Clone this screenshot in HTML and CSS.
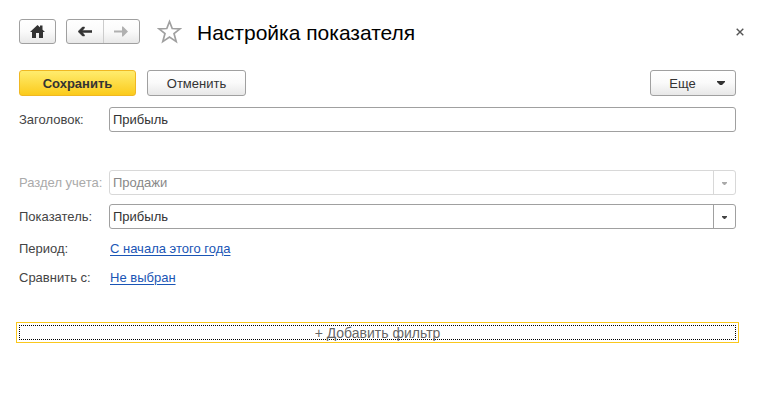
FILE: index.html
```html
<!DOCTYPE html>
<html lang="ru">
<head>
    <meta charset="UTF-8">
    <meta name="viewport" content="width=device-width, initial-scale=1.0">
    <title>Настройка показателя</title>
    <link rel="stylesheet" href="styles.css">
</head>
<body>
    <header class="header">
        <button type="button" class="btn home" aria-label="Домой">
            <svg width="15" height="13" viewBox="0 0 15 13"><path d="M7.5 0L15 7H13V13H9V8H6V13H2V7H0Z M10 0.5H12.5V5H10Z" fill="#333"/></svg>
        </button>
        <div class="nav">
            <button type="button" class="nav-btn" aria-label="Назад">
                <svg width="14" height="11" viewBox="0 0 14 11"><path d="M0 5.5L4.5 1H6.5V2L4.5 4.5H14V6.5H4.5L6.5 9V10H4.5Z" fill="#333" stroke="#333" stroke-width="0.5"/></svg>
            </button>
            <button type="button" class="nav-btn forward" aria-label="Вперед" disabled>
                <svg width="14" height="11" viewBox="0 0 14 11"><path d="M14 5.5L9 0.5H8V4.5H0V6.5H8V10.5H9Z" fill="#b0b0b0"/></svg>
            </button>
        </div>
        <button type="button" class="icon-btn star" aria-label="В избранное">
            <svg width="25" height="25" viewBox="0 0 25 25"><path d="M12.5 2.5L15.2 9.5L23 9.8L17 14.6L19.2 22.6L12.5 18.1L5.8 22.6L8 14.6L2 9.8L9.8 9.5Z" fill="none" stroke="#a0a0a0" stroke-width="1.7"/></svg>
        </button>
        <h1 class="title">Настройка показателя</h1>
        <button type="button" class="icon-btn close" aria-label="Закрыть">
            <svg width="8" height="8" viewBox="0 0 8 8"><path d="M0.7 0.7L7.3 7.3M7.3 0.7L0.7 7.3" stroke="#555" stroke-width="1.4"/></svg>
        </button>
    </header>

    <form class="form">
        <div class="toolbar">
            <button type="button" class="btn save">Сохранить</button>
            <button type="button" class="btn cancel">Отменить</button>
            <button type="button" class="btn more">
                Еще
                <svg width="8" height="4" viewBox="0 0 8 4"><path d="M0 0H8V1L5 4H3L0 1Z" fill="#333"/></svg>
            </button>
        </div>

        <div class="row row-title">
            <label for="caption">Заголовок:</label>
            <input type="text" id="caption" class="field" value="Прибыль">
        </div>
        <div class="row disabled">
            <label for="section">Раздел учета:</label>
            <div class="combo">
                <select id="section" class="field" disabled>
                    <option>Продажи</option>
                </select>
                <span class="arrow"><svg width="5" height="3" viewBox="0 0 5 3"><path d="M0 0H5V1L3 3H2L0 1Z" fill="currentColor"/></svg></span>
            </div>
        </div>
        <div class="row">
            <label for="indicator">Показатель:</label>
            <div class="combo">
                <select id="indicator" class="field">
                    <option>Прибыль</option>
                </select>
                <span class="arrow"><svg width="5" height="3" viewBox="0 0 5 3"><path d="M0 0H5V1L3 3H2L0 1Z" fill="currentColor"/></svg></span>
            </div>
        </div>
        <div class="row row-link">
            <span id="period-label">Период:</span>
            <a href="#" class="link" aria-describedby="period-label">С начала этого года</a>
        </div>
        <div class="row row-link">
            <span id="compare-label">Сравнить с:</span>
            <a href="#" class="link" aria-describedby="compare-label">Не выбран</a>
        </div>

        <div class="filter">
            <button type="button" class="add-filter">+ Добавить фильтр</button>
        </div>
    </form>
</body>
</html>
```

FILE: styles.css
```css
* {
    box-sizing: border-box;
}

body {
    margin: 0;
    padding: 19px 18px 19px 19px;
    background-color: #fff;
    color: #444;
    font-family: Arial, "Liberation Sans", sans-serif;
    font-size: 13px;
}

button,
input,
select {
    font: inherit;
    color: #333;
}

svg {
    display: block;
}

.header {
    display: flex;
    align-items: center;
    height: 25px;
}

.btn,
.nav {
    border: 1px solid #a0a0a0;
    border-radius: 3px;
    background: linear-gradient(#fff, #fafafa 50%, #e8e8e8);
}

.btn {
    display: flex;
    align-items: center;
    justify-content: center;
    height: 26px;
    padding: 0;
    cursor: pointer;
}

.header .home {
    width: 37px;
    height: 25px;
    margin-right: 10px;
}

.nav {
    display: flex;
    width: 74px;
    height: 25px;
    margin-right: 17px;
}

.nav-btn {
    flex: 1;
    display: flex;
    align-items: center;
    justify-content: center;
    padding: 0;
    border: none;
    background: none;
}

.forward {
    border-left: 1px solid #ccc;
}

.icon-btn {
    padding: 0;
    border: none;
    background: none;
    cursor: pointer;
}

.star {
    margin-right: 15px;
}

.title {
    flex: 1;
    margin: 0;
    padding-top: 2px;
    color: #000;
    font-size: 21px;
    font-weight: normal;
    line-height: 24px;
}

.form {
    margin-right: 8px;
}

.toolbar {
    display: flex;
    gap: 11px;
    margin: 26px 0 11px;
}

.save {
    width: 117px;
    border-color: #f0b822;
    background: linear-gradient(#ffec6e, #fbcb1c);
    font-weight: bold;
}

.cancel {
    width: 99px;
}

.more {
    gap: 21px;
    width: 86px;
    margin-left: auto;
    padding-left: 8px;
}

.row {
    display: grid;
    grid-template-columns: 90px 1fr;
    align-items: center;
    margin-bottom: 9px;
}

.row-title {
    margin-bottom: 38px;
}

.field {
    width: 100%;
    height: 25px;
    padding: 0 3px;
    border: 1px solid #a0a0a0;
    border-radius: 3px;
    background-color: #fff;
}

.combo {
    display: grid;
    grid-template-columns: 1fr 23px;
}

.combo .field {
    grid-area: 1 / 1 / 2 / 3;
    appearance: none;
}

/* drop-down cell over the right end of the select */
.arrow {
    grid-area: 1 / 2;
    display: flex;
    align-items: center;
    justify-content: center;
    padding: 1px 1px 0 0;
    border-left: 1px solid #a0a0a0;
    color: #444;
    pointer-events: none;
}

.disabled,
.disabled .arrow {
    color: #aaa;
}

.disabled .field {
    border-color: #d8d8d8;
    color: #888;
    opacity: 1;
}

.disabled .arrow {
    border-color: #d8d8d8;
}

.row-link {
    margin-bottom: 7px;
    line-height: 22px;
}

.link {
    justify-self: start;
    margin-left: 1px;
    color: #1a55b5;
    text-underline-offset: 2px;
}

.filter {
    margin: 33px -3px 0;
    padding: 2px;
    border: 1px solid #fac81e;
}

.add-filter {
    display: block;
    width: 100%;
    height: 15px;
    padding: 0;
    border: 1px dotted #000;
    border-radius: 1px;
    background: none;
    color: #666;
    font-size: 14px;
    line-height: 15px;
}
```
